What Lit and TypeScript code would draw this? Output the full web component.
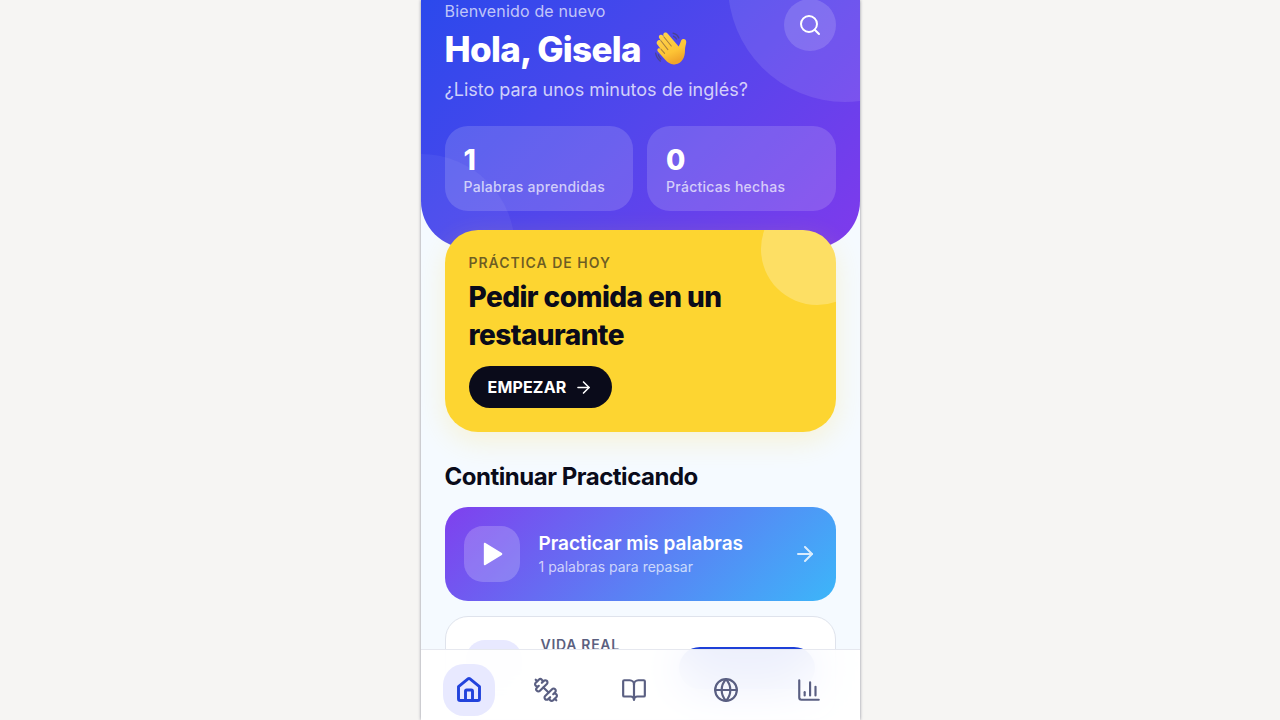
import { LitElement, html, css, svg } from "lit";
import { customElement } from "lit/decorators.js";

const icons = {
  search: svg`<circle cx="11" cy="11" r="8"/><path d="m21 21-4.3-4.3"/>`,
  arrow: svg`<path d="M5 12h14"/><path d="m12 5 7 7-7 7"/>`,
  home: svg`<path d="M15 21v-8a1 1 0 0 0-1-1h-4a1 1 0 0 0-1 1v8"/><path d="M3 9.200 11.400 2.300a1 1 0 0 1 1.200 0L21 9.200V19.500a1.500 1.500 0 0 1-1.500 1.500h-15A1.500 1.500 0 0 1 3 19.500z"/>`,
  dumbbell: svg`<path d="M14.4 14.4 9.6 9.6"/><path d="M18.657 21.485a2 2 0 1 1-2.829-2.828l-1.767 1.768a2 2 0 1 1-2.829-2.829l6.364-6.364a2 2 0 1 1 2.829 2.829l-1.768 1.767a2 2 0 1 1 2.828 2.829z"/><path d="m21.5 21.5-1.4-1.4"/><path d="M3.9 3.9 2.5 2.5"/><path d="M6.404 12.768a2 2 0 1 1-2.829-2.829l1.768-1.767a2 2 0 1 1-2.828-2.829l2.828-2.828a2 2 0 1 1 2.829 2.828l1.767-1.768a2 2 0 1 1 2.829 2.829z"/>`,
  book: svg`<path d="M12 7v14"/><path d="M3 18a1 1 0 0 1-1-1V4a1 1 0 0 1 1-1h5a4 4 0 0 1 4 4 4 4 0 0 1 4-4h5a1 1 0 0 1 1 1v13a1 1 0 0 1-1 1h-6a3 3 0 0 0-3 3 3 3 0 0 0-3-3z"/>`,
  globe: svg`<circle cx="12" cy="12" r="10"/><path d="M12 2a14.5 14.5 0 0 0 0 20 14.5 14.5 0 0 0 0-20"/><path d="M2 12h20"/>`,
  chart: svg`<path d="M3 3v16a2 2 0 0 0 2 2h16"/><path d="M18 17V9"/><path d="M13 17V5"/><path d="M8 17v-3"/>`,
};

const icon = (name: keyof typeof icons, cls = "") =>
  html`<svg class="icon ${cls}" viewBox="0 0 24 24" aria-hidden="true">${icons[name]}</svg>`;

const wave = html`<svg class="wave" viewBox="0 0 36 36" role="img" aria-label="Saludo">
  <defs>
    <linearGradient id="skin" x1="0" y1="0" x2="0.4" y2="1">
      <stop offset="0" stop-color="#ffd552"/><stop offset="0.7" stop-color="#fdc435"/><stop offset="1" stop-color="#f0a52a"/>
    </linearGradient>
  </defs>
  <g fill="none" stroke="#4a4494" stroke-width="1.300" stroke-linecap="round">
    <path d="M19 3q4 1 5.500 4.500M19.500 6q2 .8 2.700 2.600M2.500 22q1 5 4.500 7.500M5 23.500q.8 2.500 2.500 4"/>
  </g>
  <path fill="url(#skin)" d="M4.200 10.500c.8-1.200 2.200-1.200 3.300-.4L6 7.800c-1.500-2.600 1.700-4.600 3.500-2.400l1 1.200L10.200 6c-1.700-3 1.900-5 3.800-2.400l10.300 12c.8-1.500 1.500-3.200 2.200-5.200 1-3 5.300-2.300 5 1.100-.3 2.700-1.200 4.400-1.200 7.600 0 7-2.800 12.200-9 13.400-4 .8-7.200-1.300-9.500-4L4.800 20.600c-1.900-2.200.6-4.500 2.500-2.600l.6.600-4-5c-.7-1-.5-2.200.3-3.100z"/>
  <g fill="none" stroke="#a9803e" stroke-width="1" stroke-linecap="round">
    <path d="m10.400 6.600 6.900 8.600M7.500 10.200l6.600 8.400M7.700 18.400l3.300 3.700"/>
  </g>
</svg>`;

@customElement("app-root")
export class AppRoot extends LitElement {
  static styles = css`
    :host { display: block; height: 100vh; overflow: hidden; background: #f6f5f3; font-family: Inter, "Noto Sans", sans-serif; color: #0a0b1a; }
    * { box-sizing: border-box; }
    h1, h2, p { margin: 0; }
    button { font: inherit; border: 0; padding: 0; cursor: pointer; }
    a { color: inherit; text-decoration: none; }
    .icon { display: block; flex: none; fill: none; stroke: currentColor; stroke-width: 2; stroke-linecap: round; stroke-linejoin: round; width: 24px; height: 24px; }
    .phone { position: relative; max-width: 439px; height: 100%; margin: 0 auto; background: #f5faff; box-shadow: 0 0 3px rgba(15, 20, 50, 0.45); overflow: hidden; }
    .hero { position: relative; overflow: hidden; margin-top: -1px; padding: 0 24px 37px; border-radius: 0 0 47px 47px; background: linear-gradient(135deg, #2b49ec 0%, #5346ec 50%, #7f3aec 100%); color: #fff; }
    .bubble { position: absolute; border-radius: 50%; background: rgba(255, 255, 255, 0.1); }
    .bubble.top { width: 234px; height: 234px; right: -102px; top: -131px; }
    .bubble.low { width: 188px; height: 188px; left: -94px; bottom: -94px; background: rgba(255, 255, 255, 0.05); }
    .greeting { position: relative; display: flex; justify-content: space-between; align-items: flex-start; }
    .welcome { font-size: 16px; line-height: 24px; letter-spacing: 0.01em; color: rgba(255, 255, 255, 0.7); }
    .name { display: flex; align-items: center; gap: 12px; font-size: 35px; line-height: 52px; font-weight: 800; letter-spacing: -0.02em; }
    .wave { width: 38px; height: 38px; }
    .ready { font-size: 18px; line-height: 30px; color: rgba(255, 255, 255, 0.75); }
    .search { display: grid; place-items: center; width: 52px; height: 52px; border-radius: 50%; background: rgba(255, 255, 255, 0.15); color: #fff; }
    .stats { position: relative; display: grid; grid-template-columns: 1fr 1fr; gap: 14px; margin-top: 21px; }
    .stat { padding: 17px 19px 14px; border-radius: 23px; background: rgba(255, 255, 255, 0.15); }
    .value { font-size: 28px; line-height: 34px; font-weight: 800; }
    .caption { font-size: 14px; line-height: 20px; font-weight: 500; letter-spacing: 0.02em; color: rgba(255, 255, 255, 0.7); }
    .body { position: relative; display: grid; padding: 0 24px; margin-top: -18px; }
    .today { position: relative; overflow: hidden; padding: 24px; border-radius: 33px; background: #fdd531; }
    .glow { border-radius: 33px; box-shadow: 0 9px 28px rgba(253, 213, 49, 0.2); }
    .bubble.sun { width: 112px; height: 112px; right: -37px; top: -37px; background: rgba(255, 255, 255, 0.25); }
    .eyebrow { font-size: 14px; line-height: 17px; font-weight: 600; letter-spacing: 0.07em; text-transform: uppercase; color: rgba(10, 11, 26, 0.6); }
    .topic { margin-top: 7px; max-width: 300px; font-size: 28px; line-height: 38px; font-weight: 800; letter-spacing: -0.02em; }
    .start { display: inline-flex; align-items: center; gap: 8px; height: 42px; margin-top: 12px; padding: 0 19px; border-radius: 21px; background: #0a0b1a; color: #fff; font-size: 16px; font-weight: 700; letter-spacing: 0.01em; vertical-align: top; }
    .start .icon { width: 19px; height: 19px; }
    .section { margin-top: 30px; font-size: 24px; line-height: 30px; font-weight: 700; letter-spacing: -0.02em; }
    .words { display: flex; align-items: center; gap: 19px; margin-top: 15px; padding: 19px; border-radius: 23px; background: linear-gradient(135deg, #7f40ee, #3cb6f9); color: #fff; }
    .tile { display: grid; place-items: center; flex: none; width: 56px; height: 56px; border-radius: 19px; background: rgba(255, 255, 255, 0.2); }
    .tile.soft { background: #e8e9ff; }
    .play { width: 28px; height: 28px; fill: #fff; }
    .copy { flex: 1; }
    .deck { font-size: 19px; line-height: 26px; font-weight: 600; }
    .count { font-size: 14px; line-height: 20px; color: rgba(255, 255, 255, 0.7); }
    .faint { opacity: 0.8; }
    .real { display: flex; align-items: center; gap: 19px; height: 104px; margin-top: 15px; padding: 19px 20px; border: 1px solid #dfe3ec; border-radius: 23px; background: #fff; }
    .real .eyebrow { align-self: flex-start; flex: 1; letter-spacing: 0.05em; color: #5b5f80; }
    .go { width: 136px; height: 42px; border-radius: 21px; background: #1d40d8; }
    .nav { position: absolute; inset: auto 0 0; display: grid; grid-template-columns: 52px 102fr 74fr 110fr 56fr; align-items: center; justify-items: center; padding: 14px 22px 4px; border-top: 1px solid #e6e8ef; background: rgba(255, 255, 255, 0.92); backdrop-filter: blur(23px); color: #5a5f82; }
    .tab { display: grid; place-items: center; width: 52px; height: 52px; border-radius: 21px; }
    .tab .icon { width: 26px; height: 26px; }
    .tab.on { background: #e8e9ff; color: #2343dc; }
    .tab.on .icon { width: 28px; height: 28px; stroke-width: 2.5; }
  `;

  render() {
    return html`<div class="phone">
      <header class="hero">
        <span class="bubble top"></span><span class="bubble low"></span>
        <div class="greeting">
          <div>
            <p class="welcome">Bienvenido de nuevo</p>
            <h1 class="name">Hola, Gisela ${wave}</h1>
            <p class="ready">¿Listo para unos minutos de inglés?</p>
          </div>
          <button class="search" aria-label="Buscar">${icon("search")}</button>
        </div>
        <div class="stats">
          <div class="stat"><p class="value">1</p><p class="caption">Palabras aprendidas</p></div>
          <div class="stat"><p class="value">0</p><p class="caption">Prácticas hechas</p></div>
        </div>
      </header>
      <main class="body">
        <div class="glow"><section class="today">
          <span class="bubble sun"></span>
          <p class="eyebrow">Práctica de hoy</p>
          <h2 class="topic">Pedir comida en un restaurante</h2>
          <button class="start">EMPEZAR ${icon("arrow")}</button>
        </section></div>
        <h2 class="section">Continuar Practicando</h2>
        <a class="words" href="#palabras">
          <span class="tile"><svg class="play" viewBox="0 0 24 24" aria-hidden="true"><path d="M5 3.200c0-.8.800-1.100 1.400-.7l14 8.700c.6.400.6 1.200 0 1.600l-14 8.700c-.6.400-1.400.1-1.400-.7z"/></svg></span>
          <div class="copy"><p class="deck">Practicar mis palabras</p><p class="count">1 palabras para repasar</p></div>
          ${icon("arrow", "faint")}
        </a>
        <section class="real">
          <span class="tile soft"></span>
          <p class="eyebrow">Vida real</p>
          <button class="go" aria-label="Empezar"></button>
        </section>
      </main>
      <nav class="nav" aria-label="Principal">
        <a class="tab on" href="#inicio" aria-label="Inicio">${icon("home")}</a>
        <a class="tab" href="#practicar" aria-label="Practicar">${icon("dumbbell")}</a>
        <a class="tab" href="#lecciones" aria-label="Lecciones">${icon("book")}</a>
        <a class="tab" href="#mundo" aria-label="Mundo">${icon("globe")}</a>
        <a class="tab" href="#progreso" aria-label="Progreso">${icon("chart")}</a>
      </nav>
    </div>`;
  }
}
